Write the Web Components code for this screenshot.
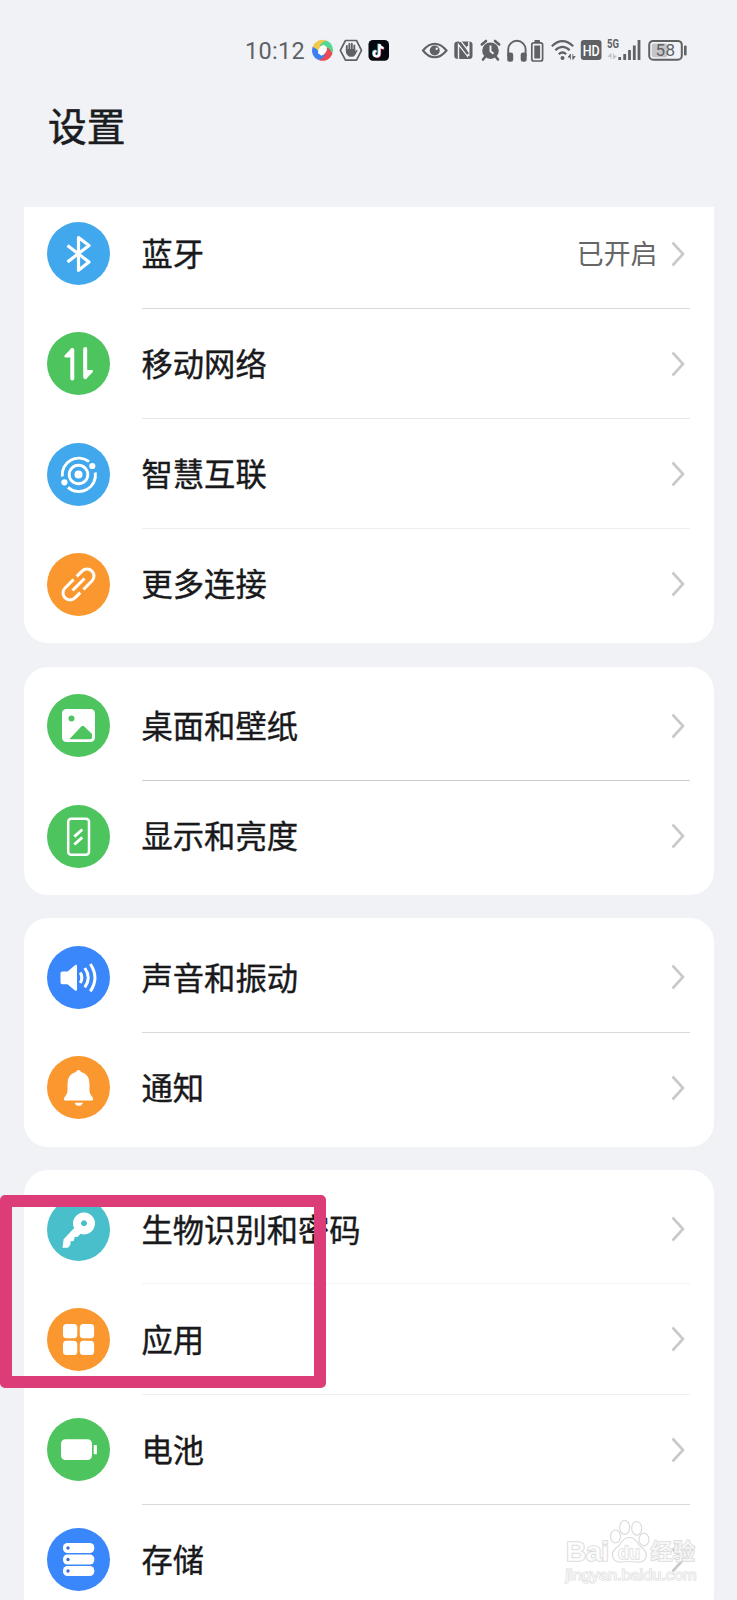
<!DOCTYPE html>
<html lang="zh-CN">
<head>
<meta charset="utf-8">
<title>设置</title>
<style>
  html, body {
    margin: 0;
    height: 1600px;
    overflow: hidden;
    background: #f1f2f6;
    font-family: "Noto Sans CJK SC", sans-serif;
  }
</style>
</head>
<body>
<settings-screen>
  <status-bar slot="status" time="10:12" battery="58"></status-bar>
  <span slot="title">设置</span>

  <settings-card clipped>
    <settings-item icon="bluetooth" color="#41a8ed" value="已开启">蓝牙</settings-item>
    <settings-item icon="network" color="#4dc45e" line="#e8e8e8">移动网络</settings-item>
    <settings-item icon="smart" color="#41a8ed" line="#efeff0">智慧互联</settings-item>
    <settings-item icon="link" color="#fa982f">更多连接</settings-item>
  </settings-card>

  <settings-card>
    <settings-item icon="wallpaper" color="#4dc45e" line="#cccccd">桌面和壁纸</settings-item>
    <settings-item icon="display" color="#4dc45e">显示和亮度</settings-item>
  </settings-card>

  <settings-card>
    <settings-item icon="sound" color="#3a87fb">声音和振动</settings-item>
    <settings-item icon="bell" color="#fa982f">通知</settings-item>
  </settings-card>

  <settings-card>
    <settings-item icon="key" color="#48bfca" line="#f3f3f4">生物识别和密码</settings-item>
    <settings-item icon="apps" color="#fa982f" line="#efeff0">应用</settings-item>
    <settings-item icon="battery" color="#4dc45e">电池</settings-item>
    <settings-item icon="storage" color="#3a87fb">存储</settings-item>
  </settings-card>

  <highlight-box slot="overlay"></highlight-box>
  <baidu-watermark slot="overlay"></baidu-watermark>
</settings-screen>

<script>
// Item icons, drawn in a 63x63 box that is the coloured circle
const ICONS = {
  bluetooth: `<path d="M20.5 23.5 42 40 31.5 48.3V15.5L42 23.5 20.5 40" fill="none" stroke="#fff" stroke-width="3.2" stroke-linejoin="round"/>`,
  network: `<path d="M25.3 18v28.5M38.2 17v28" fill="none" stroke="#fff" stroke-width="4" stroke-linecap="round"/>
    <path d="M26 15.7v9.8h-7q-3 0-1-2.4l5.500-5.900q1.500-1.500 2.500-1.500zM37.500 47.300v-9.300h7q2.500 0 1 2.200L40 46q-1.500 1.300-2.500 1.300z" fill="#fff"/>`,
  smart: `<circle cx="31.5" cy="31.5" r="4" fill="#fff"/>
    <g fill="none" stroke="#fff" stroke-width="2.9"><circle cx="31.5" cy="31.5" r="9.3"/>
    <path d="M15.300 33.500A16.500 16.500 0 0 1 42 18.700M48.300 29.500A16.500 16.500 0 0 1 21 44.300"/></g>
    <g fill="#fff"><circle cx="45.3" cy="23" r="3.1"/><circle cx="17.4" cy="39.3" r="3.1"/></g>`,
  link: `<g transform="translate(31.5 31.5) rotate(-45)" fill="none" stroke="#fff" stroke-width="3">
    <path d="M-8.500 0H8.500M0-7H-12a7 7 0 0 0 0 14H-4.500M0 7H12a7 7 0 0 0 0-14H4.500"/></g>`,
  wallpaper: `<rect x="15" y="15" width="33" height="33" rx="4.5" fill="#fff"/>
    <circle cx="24.5" cy="24.5" r="3" fill="#4dc45e"/>
    <path d="M22.300 45.200 34.300 32.400q1.500-1.400 3 0l7.700 7.600v3.200q0 2-2 2z" fill="#4dc45e"/>`,
  display: `<rect x="21.2" y="13.8" width="20.8" height="36" rx="3" fill="none" stroke="#fff" stroke-width="2.5"/>
    <path d="M27.300 31.700l8-7.200M27.300 39.500l8-7.200" stroke="#fff" stroke-width="2.9"/>`,
  sound: `<path d="M13.500 27.300q0-1.800 1.800-1.800H20.500L28 19.300q2-1.300 2 1v23q0 2.400-2 1.100L20.500 38.300H15.300q-1.800 0-1.800-1.800z" fill="#fff"/>
    <g fill="none" stroke="#fff" stroke-width="3"><path d="M33.300 26.500q3 5.200 0 10.400M37.800 22q6.800 9.700 0 19.400M43.300 18q9.300 13.800 0 27.400"/></g>`,
  bell: `<path d="M31.500 14q2 0 2.500 2 8.500 2.300 8.500 11.500v7.300q0 3 3.300 7 1 2.700-1 2.700H18.200q-2 0-1-2.700 3.300-4 3.300-7V27.500Q20.500 18.300 29 16q.5-2 2.500-2zM27.700 46.700h8.200q-.7 3.100-4.100 3.100t-4.100-3.100z" fill="#fff"/>`,
  key: `<path d="M28.200 29 16.600 41.200 15.500 49.800H21l2.500-3.300v-3.200l3.200-.3 1-4.100 3-.2 3.500-3.700z" fill="#fff"/>
    <path fill-rule="evenodd" d="M37 14.500a11 11 0 1 0 .01 0zM37 22.300a3 3 0 1 1-.01 0z" fill="#fff"/>`,
  apps: `<g fill="#fff"><rect x="16" y="16" width="14.3" height="14.3" rx="3.5"/><rect x="32.8" y="16" width="14.3" height="14.3" rx="3.5"/>
    <rect x="16" y="32.8" width="14.3" height="14.3" rx="3.5"/><rect x="32.8" y="32.8" width="14.3" height="14.3" rx="3.5"/></g>`,
  battery: `<rect x="14" y="21.2" width="31" height="20.8" rx="4.5" fill="#fff"/><rect x="46.7" y="27" width="3.2" height="9.3" rx=".7" fill="#fff"/>`,
  storage: `<g fill="#fff"><rect x="16" y="15" width="31.3" height="10" rx="4.5"/><rect x="16" y="26.5" width="31.3" height="10" rx="4.5"/><rect x="16" y="38" width="31.3" height="10" rx="4.5"/></g>
    <g fill="#3a6fd0"><circle cx="21" cy="20" r="1.7"/><circle cx="21" cy="31.5" r="1.7"/><circle cx="21" cy="43" r="1.7"/></g>`
};

class SettingsScreen extends HTMLElement {
  css = `
    :host {
      position: relative;
      display: flex;
      flex-direction: column;
      width: 737px;
      height: 1600px;
      overflow: hidden;
    }

    header {
      box-sizing: border-box;
      height: 111px;
      padding-left: 48px;
      color: #1b1c1f;
      font-size: 38.7px;
      line-height: 56px;
      -webkit-text-stroke: .6px;
    }

    main {
      flex: 1;
      min-height: 0;
      display: flex;
      flex-direction: column;
      gap: 23.7px;
      padding: 0 23.5px;
      overflow: hidden;
    }
  `;

  constructor() {
    super();
    this.attachShadow({ mode: "open" });
    this.shadowRoot.innerHTML = `
      <style>${this.css}</style>
      <slot name="status"></slot>
      <header><slot name="title"></slot></header>
      <main><slot></slot></main>
      <slot name="overlay"></slot>
    `;
  }
}

class StatusBar extends HTMLElement {
  css = `
    :host {
      display: flex;
      align-items: flex-start;
      box-sizing: border-box;
      height: 96px;
      padding: 38px 0 0 245px;
      color: #606165;
    }

    .time {
      width: 67px;
      font: 400 23.5px/26px Roboto, sans-serif;
      letter-spacing: .3px;
    }

    svg { display: block; flex: none; overflow: visible; }
    .gap { width: 31px; }
    text { font-family: Roboto, sans-serif; }
  `;

  constructor() {
    super();
    this.attachShadow({ mode: "open" });
  }

  connectedCallback() {
    this.shadowRoot.innerHTML = `
      <style>${this.css}</style>
      <span class="time">${this.getAttribute("time")}</span>
      ${this.apps()}
      <span class="gap"></span>
      ${this.indicators()}
    `;
  }

  apps() {
    // one blade of the pinwheel, turned four times
    const blade = "M-9.800-4A10.500 10.500 0 0 1 3.500-9.900L1-5.500Q-4.500-3-4.500 3-8.500.800-9.800-4z";
    return `
      <svg width="27" height="24" viewBox="0 0 27 24">
        <g transform="translate(10.5 12.3)">
          <path d="${blade}" fill="#f3c94c"/>
          <path d="${blade}" fill="#55d892" transform="rotate(90)"/>
          <path d="${blade}" fill="#ee4a53" transform="rotate(180)"/>
          <path d="${blade}" fill="#3c7ff0" transform="rotate(270)"/>
          <path d="M-4.500 3Q-4.500-3 1-5.500L4.500-3Q4.500 3-1 5.500z" fill="#fff"/>
        </g>
      </svg>
      <svg width="30" height="24" viewBox="0 0 30 24">
        <path d="M6.500 2.500h11l5 9.800-5 9.800h-11L1.300 12.300z" fill="none" stroke="currentColor" stroke-width="1.7" stroke-linejoin="round"/>
        <path d="M7.800 12.500V8M10.300 12V6M12.800 12V5.700M15.300 12V7.500" stroke="currentColor" stroke-width="1.9" stroke-linecap="round"/>
        <path d="M6.900 11h9.400v2.500l1.200-1.600q1.300-.6 1 .6-1.300 3.500-3.500 5.700-2.500 1.300-5.500 0-2.600-1.700-2.600-4.200z" fill="currentColor"/>
      </svg>
      <svg width="22" height="24" viewBox="0 0 22 24">
        <rect x="-.5" y="2" width="20.5" height="20.8" rx="4.5" fill="#07070f"/>
        <g fill="none" stroke-width="2.2">
          <path d="M10 6v9.500a2.700 2.700 0 1 1-3-2.700M10 6q.5 3.500 4.200 4" stroke="#42d9dc" transform="translate(-.5 -.3)"/>
          <path d="M10 6v9.500a2.700 2.700 0 1 1-3-2.700M10 6q.5 3.500 4.200 4" stroke="#e33e65" transform="translate(1 .6)"/>
          <path d="M10 6v9.500a2.700 2.700 0 1 1-3-2.700M10 6q.5 3.500 4.200 4" stroke="#fff" transform="translate(.4 .2)"/>
        </g>
      </svg>
    `;
  }

  indicators() {
    return `
      <svg width="32" height="24" viewBox="0 0 32 24">
        <path d="M1 12.500Q6.500 5.700 12.700 5.700T24.500 12.500Q19 19.300 12.700 19.300T1 12.500z" fill="none" stroke="currentColor" stroke-width="2.1"/>
        <circle cx="12.700" cy="12.500" r="5" fill="currentColor"/><circle cx="14.700" cy="10.800" r="1.200" fill="#f1f2f6"/>
      </svg>
      <svg width="26" height="24" viewBox="0 0 26 24">
        <path d="M4 3.500h11q3.500 0 3.500 3V18q0 3-3.500 3H4Q.3 21 .3 18V6.500q0-3 3.700-3z" fill="currentColor"/>
        <path d="M4.500 21V6.500l9 11.500V8M5 3.500h2l7 9M14.800 3.500V18" fill="none" stroke="#f1f2f6" stroke-width="1.4"/>
        <path d="M5.500 4.500l8.500 11.500" stroke="currentColor" stroke-width="2.4"/>
      </svg>
      <svg width="27" height="24" viewBox="0 0 27 24">
        <circle cx="10.500" cy="12.700" r="8.300" fill="currentColor"/>
        <path d="M1.800 6.500 6 3M15 3l4.200 3.500M5 19l-2 2.500M16 19l2 2.500" stroke="currentColor" stroke-width="2.6" stroke-linecap="round"/>
        <path d="M10.500 7.500v5.700l3 2.500" fill="none" stroke="#f1f2f6" stroke-width="1.9"/>
      </svg>
      <svg width="23.5" height="24" viewBox="0 0 23.5 24">
        <path d="M1.200 18v-6.500a8.700 8.700 0 0 1 17.400 0V18" fill="none" stroke="currentColor" stroke-width="1.9"/>
        <rect x=".2" y="14.500" width="6" height="9.300" rx="2.300" fill="currentColor"/><rect x="13.700" y="14.500" width="6" height="9.300" rx="2.300" fill="currentColor"/>
      </svg>
      <svg width="20" height="24" viewBox="0 0 20 24">
        <rect x=".8" y="4.800" width="10.800" height="18.200" rx="2" fill="none" stroke="currentColor" stroke-width="1.7"/>
        <path d="M3.500 2h5.400v2.300H3.500zM3.300 7.500h5.800v13H3.300z" fill="currentColor"/>
      </svg>
      <svg width="30" height="24" viewBox="0 0 30 24">
        <g fill="none" stroke="currentColor" stroke-width="2.2">
          <path d="M.8 8.300q10.700-10.200 21.400 0M4.300 12.300q7.200-6.800 14.400 0M7.800 16.200q3.700-3.400 7.400 0"/>
        </g>
        <circle cx="11.500" cy="20" r="2" fill="currentColor"/>
        <path d="M19.500 21.500v-5.500l-2.400 3.200h2.400M21.800 16v5.500l2.400-3h-2.400" fill="currentColor" stroke="currentColor" stroke-width=".8"/>
      </svg>
      <svg width="26" height="24" viewBox="0 0 26 24">
        <rect x="-.2" y="2" width="20.700" height="20" rx="3" fill="currentColor"/>
        <text x="1.700" y="17.500" font-size="14.5" font-weight="500" fill="#fff" textLength="17" lengthAdjust="spacingAndGlyphs">HD</text>
      </svg>
      <svg width="41" height="24" viewBox="0 0 41 24">
        <text x="0" y="10.300" font-size="12.5" font-weight="700" fill="currentColor" textLength="12" lengthAdjust="spacingAndGlyphs">5G</text>
        <path d="M4 21v-5.500L1.200 18.500H4M6.500 15.500V21l2.800-3H6.500" fill="#bcbdc1" stroke="#bcbdc1" stroke-width=".8"/>
        <path d="M12.700 19v3M17.700 16v6M22.500 12v10M27.300 7.500V22M32 2v20" stroke="currentColor" stroke-width="2.8"/>
      </svg>
      <svg width="40" height="24" viewBox="0 0 40 24">
        <rect x="1.200" y="2.900" width="32.600" height="18.800" rx="4" fill="none" stroke="currentColor" stroke-width="2"/>
        <rect x="3.800" y="5.400" width="15.500" height="13.800" rx="2" fill="#c3c4c8"/>
        <rect x="36" y="7.500" width="2.600" height="10" rx="1" fill="currentColor"/>
        <text x="7.600" y="18.400" font-size="17" fill="currentColor" textLength="19.5">${this.getAttribute("battery")}</text>
      </svg>
    `;
  }
}

class SettingsCard extends HTMLElement {
  css = `
    :host {
      display: block;
      flex: none;
      padding: 4px 0;
      border-radius: 24px;
      background: #fff;
    }

    /* first card is scrolled partly under the header */
    :host([clipped]) {
      margin-top: -8.5px;
      padding-top: 0;
      border-radius: 0 0 24px 24px;
    }

    ::slotted(:last-child) { --line: transparent; }
  `;

  constructor() {
    super();
    this.attachShadow({ mode: "open" });
    this.shadowRoot.innerHTML = `<style>${this.css}</style><slot></slot>`;
  }
}

class SettingsItem extends HTMLElement {
  css = `
    :host {
      display: flex;
      align-items: center;
      height: 110.1px;
      padding: 0 24px 0 23.5px;
    }

    .icon {
      flex: none;
      width: 63px;
      height: 63px;
      margin: .6px 31.5px 0 0;
      border-radius: 50%;
    }

    .body {
      flex: 1;
      display: flex;
      align-items: center;
      box-sizing: border-box;
      height: 100%;
      padding: 1px 5px 0 0;
      border-bottom: 1px solid var(--line, var(--item-line));
    }

    .label {
      flex: 1;
      padding-bottom: 1px;
      color: #19191b;
      font-size: 31.3px;
      line-height: 44px;
      -webkit-text-stroke: .4px;
    }

    .value {
      margin-right: 13px;
      padding-bottom: 1px;
      color: #666;
      font-size: 26.9px;
      line-height: 40px;
    }

    svg { display: block; }
  `;

  constructor() {
    super();
    this.attachShadow({ mode: "open" });
  }

  connectedCallback() {
    const value = this.getAttribute("value");
    const line = this.getAttribute("line") || "#d9d9da";
    this.shadowRoot.innerHTML = `
      <style>${this.css}</style>
      <svg class="icon" viewBox="0 0 63 63" style="background:${this.getAttribute("color")}">${ICONS[this.getAttribute("icon")]}</svg>
      <div class="body" style="--item-line:${line}">
        <span class="label"><slot></slot></span>
        ${value ? `<span class="value">${value}</span>` : ""}
        <svg width="14" height="26" viewBox="0 0 14 26"><path d="M1.5 1.5 12 13 1.5 24.5" fill="none" stroke="#c9c9cb" stroke-width="2.6"/></svg>
      </div>
    `;
  }
}

class HighlightBox extends HTMLElement {
  constructor() {
    super();
    this.attachShadow({ mode: "open" });
    this.shadowRoot.innerHTML = `
      <style>
        :host {
          position: absolute;
          left: 0;
          top: 1195px;
          box-sizing: border-box;
          width: 326px;
          height: 193px;
          border: 12px solid #dc3d78;
          border-radius: 5px;
        }
      </style>
    `;
  }
}

class BaiduWatermark extends HTMLElement {
  constructor() {
    super();
    this.attachShadow({ mode: "open" });
    this.shadowRoot.innerHTML = `
      <style>
        :host { position: absolute; left: 560px; top: 1515px; }
        svg { display: block; }
        text { font-family: "Liberation Sans", "Noto Sans CJK SC", sans-serif; paint-order: stroke; }
      </style>
      <svg width="145" height="75" viewBox="0 0 145 75" fill="#fff" fill-opacity=".75" stroke="#dcdcdc" stroke-width="1.7">
        <g stroke-width="1.2">
          <ellipse cx="55.5" cy="21.5" rx="5" ry="6.5"/><ellipse cx="64.7" cy="12.5" rx="5" ry="7"/>
          <ellipse cx="76.7" cy="13.3" rx="5" ry="6.8"/><ellipse cx="84" cy="24.5" rx="5" ry="6.3"/>
          <path d="M69.500 22.500q4.500 0 7.500 4.500 2 3.500 6 6.500 5 4.500 2.500 10-2.500 4.500-8 3.500-8-1-16 0-6 .5-8.500-4-2-5.500 2.500-9.500 4-3 6-6.500 3-4.500 8-4.500z"/>
        </g>
        <text x="6" y="46" font-size="28" font-weight="700" textLength="43">Bai</text>
        <text x="58" y="44" font-size="18" font-weight="700" textLength="22" stroke-width="1.3">du</text>
        <text x="90.5" y="44" font-size="22" font-weight="500" textLength="44.5">经验</text>
        <text x="5.500" y="64.500" font-size="15.5" textLength="131" lengthAdjust="spacingAndGlyphs" stroke-width="1.2">jingyan.baidu.com</text>
      </svg>
    `;
  }
}

customElements.define("settings-screen", SettingsScreen);
customElements.define("status-bar", StatusBar);
customElements.define("settings-card", SettingsCard);
customElements.define("settings-item", SettingsItem);
customElements.define("highlight-box", HighlightBox);
customElements.define("baidu-watermark", BaiduWatermark);
</script>
</body>
</html>
